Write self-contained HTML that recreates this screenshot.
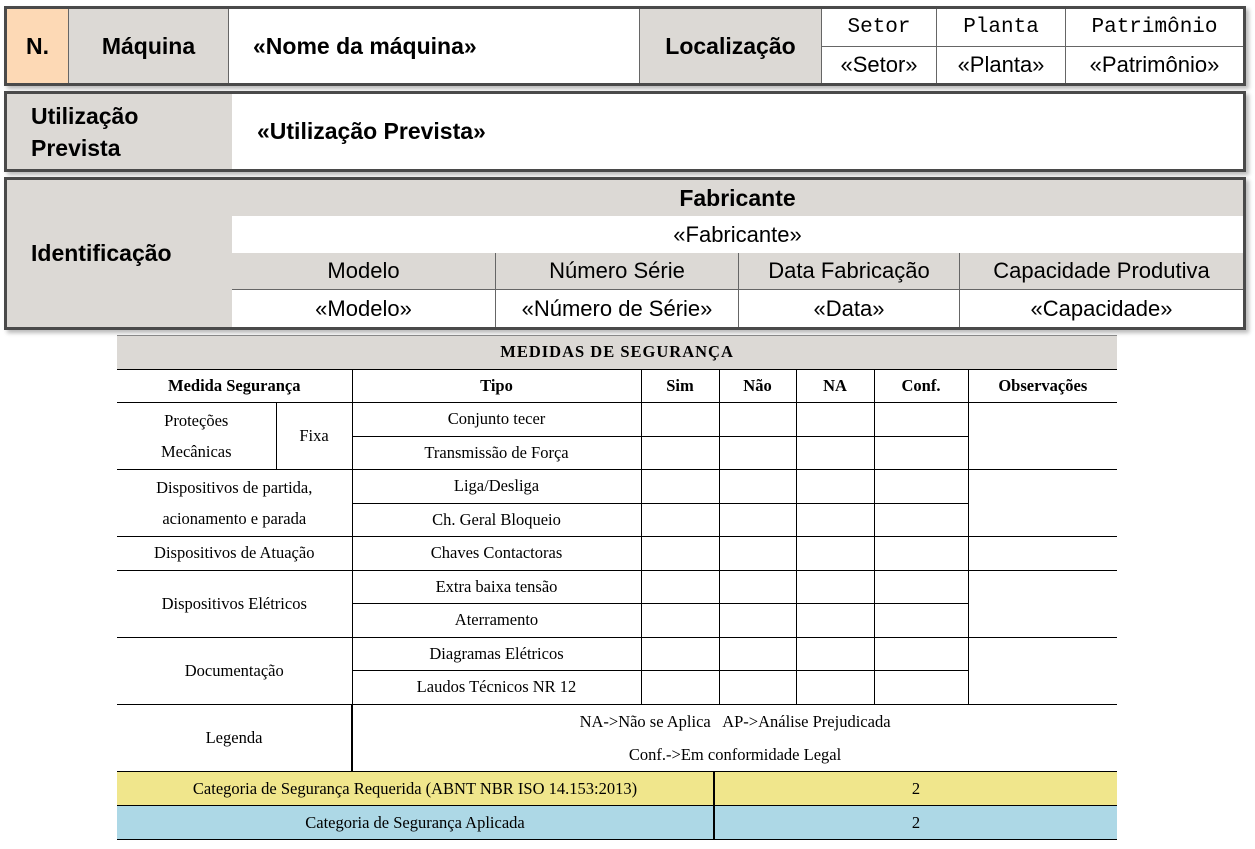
<!DOCTYPE html>
<html><head><meta charset="utf-8"><style>
body{margin:0;width:1255px;height:849px;background:#fff;position:relative;overflow:hidden;font-family:"Liberation Sans",sans-serif}
.box{position:absolute;border:3px solid #4a4a4a;box-shadow:3px 3px 4px #bbb;background:#fff}
.c{position:absolute;display:flex;align-items:center;justify-content:center;box-sizing:border-box;color:#000}
.g{background:#dcd9d5}
.b{font-weight:bold;font-size:23px}
.n{font-size:22px}
.m{font-family:"Liberation Mono",monospace;font-size:21px}
.vl{border-left:1px solid #666}
.ht{border-top:1px solid #666}
table{position:absolute;left:117px;top:335px;width:1000px;border-collapse:collapse;font-family:"Liberation Serif",serif;font-size:16.5px;table-layout:fixed}
td{border:1px solid #000;text-align:center;padding:0;height:32.5px;line-height:32px}
tr td:first-child{border-left:none}
tr td:last-child{border-right:none}
.sp{display:flex;height:33px;line-height:33px}
.sp div{text-align:center}
</style></head><body>
<div class="box" style="left:4px;top:6px;width:1236px;height:74px">
 <div class="c b" style="left:0;top:0;width:61px;height:74px;background:#fdd9b5">N.</div>
 <div class="c g b vl" style="left:61px;top:0;width:160px;height:74px">Máquina</div>
 <div class="c b vl" style="left:221px;top:0;width:411px;height:74px;justify-content:flex-start;padding-left:24px">«Nome da máquina»</div>
 <div class="c g b vl" style="left:632px;top:0;width:182px;height:74px">Localização</div>
 <div class="c m vl" style="left:814px;top:0;width:115px;height:37px">Setor</div>
 <div class="c m vl" style="left:929px;top:0;width:129px;height:37px">Planta</div>
 <div class="c m vl" style="left:1058px;top:0;width:178px;height:37px">Patrimônio</div>
 <div class="c n vl ht" style="left:814px;top:37px;width:115px;height:37px">«Setor»</div>
 <div class="c n vl ht" style="left:929px;top:37px;width:129px;height:37px">«Planta»</div>
 <div class="c n vl ht" style="left:1058px;top:37px;width:178px;height:37px">«Patrimônio»</div>
</div>
<div class="box" style="left:4px;top:91px;width:1236px;height:75px">
 <div class="c g b" style="left:0;top:0;width:225px;height:75px;justify-content:flex-start;padding-left:24px;line-height:32px">Utilização<br>Prevista</div>
 <div class="c b" style="left:225px;top:0;width:1011px;height:75px;justify-content:flex-start;padding-left:25px">«Utilização Prevista»</div>
</div>
<div class="box" style="left:4px;top:177px;width:1236px;height:147px">
 <div class="c g b" style="left:0;top:0;width:225px;height:147px;justify-content:flex-start;padding-left:24px">Identificação</div>
 <div class="c g b" style="left:225px;top:0;width:1011px;height:36px">Fabricante</div>
 <div class="c n" style="left:225px;top:36px;width:1011px;height:37px">«Fabricante»</div>
 <div class="c g n" style="left:225px;top:73px;width:263px;height:36px">Modelo</div>
 <div class="c g n vl" style="left:488px;top:73px;width:243px;height:36px">Número Série</div>
 <div class="c g n vl" style="left:731px;top:73px;width:221px;height:36px">Data Fabricação</div>
 <div class="c g n vl" style="left:952px;top:73px;width:284px;height:36px">Capacidade Produtiva</div>
 <div class="c n ht" style="left:225px;top:109px;width:263px;height:38px">«Modelo»</div>
 <div class="c n vl ht" style="left:488px;top:109px;width:243px;height:38px">«Número de Série»</div>
 <div class="c n vl ht" style="left:731px;top:109px;width:221px;height:38px">«Data»</div>
 <div class="c n vl ht" style="left:952px;top:109px;width:284px;height:38px">«Capacidade»</div>
</div>
<table>
<colgroup><col style="width:159px"><col style="width:76px"><col style="width:289px"><col style="width:78px"><col style="width:77px"><col style="width:78px"><col style="width:94px"><col style="width:149px"></colgroup>
<tr><td colspan="8" style="background:#dcd9d5;font-weight:bold;letter-spacing:1px;border-top:1px solid #888">MEDIDAS DE SEGURANÇA</td></tr>
<tr style="font-weight:bold"><td colspan="2">Medida Segurança</td><td>Tipo</td><td>Sim</td><td>Não</td><td>NA</td><td>Conf.</td><td>Observações</td></tr>
<tr><td rowspan="2" style="line-height:31px">Proteções<br>Mecânicas</td><td rowspan="2">Fixa</td><td>Conjunto tecer</td><td></td><td></td><td></td><td></td><td rowspan="2"></td></tr>
<tr><td>Transmissão de Força</td><td></td><td></td><td></td><td></td></tr>
<tr><td colspan="2" rowspan="2" style="line-height:31px">Dispositivos de partida,<br>acionamento e parada</td><td>Liga/Desliga</td><td></td><td></td><td></td><td></td><td rowspan="2"></td></tr>
<tr><td>Ch. Geral Bloqueio</td><td></td><td></td><td></td><td></td></tr>
<tr><td colspan="2">Dispositivos de Atuação</td><td>Chaves Contactoras</td><td></td><td></td><td></td><td></td><td></td></tr>
<tr><td colspan="2" rowspan="2">Dispositivos Elétricos</td><td>Extra baixa tensão</td><td></td><td></td><td></td><td></td><td rowspan="2"></td></tr>
<tr><td>Aterramento</td><td></td><td></td><td></td><td></td></tr>
<tr><td colspan="2" rowspan="2">Documentação</td><td>Diagramas Elétricos</td><td></td><td></td><td></td><td></td><td rowspan="2"></td></tr>
<tr><td>Laudos Técnicos NR 12</td><td></td><td></td><td></td><td></td></tr>
<tr><td colspan="2" style="height:66px;border-right:2px solid #000">Legenda</td><td colspan="6" style="line-height:33px">NA-&gt;Não se Aplica &nbsp; AP-&gt;Análise Prejudicada<br>Conf.-&gt;Em conformidade Legal</td></tr>
<tr><td colspan="8" style="height:auto;line-height:normal"><div class="sp" style="background:#f0e68c"><div style="width:596px;border-right:2px solid #000">Categoria de Segurança Requerida (ABNT NBR ISO 14.153:2013)</div><div style="flex:1">2</div></div></td></tr>
<tr><td colspan="8" style="height:auto;line-height:normal"><div class="sp" style="background:#add8e6"><div style="width:596px;border-right:2px solid #000">Categoria de Segurança Aplicada</div><div style="flex:1">2</div></div></td></tr>
</table>
</body></html>
